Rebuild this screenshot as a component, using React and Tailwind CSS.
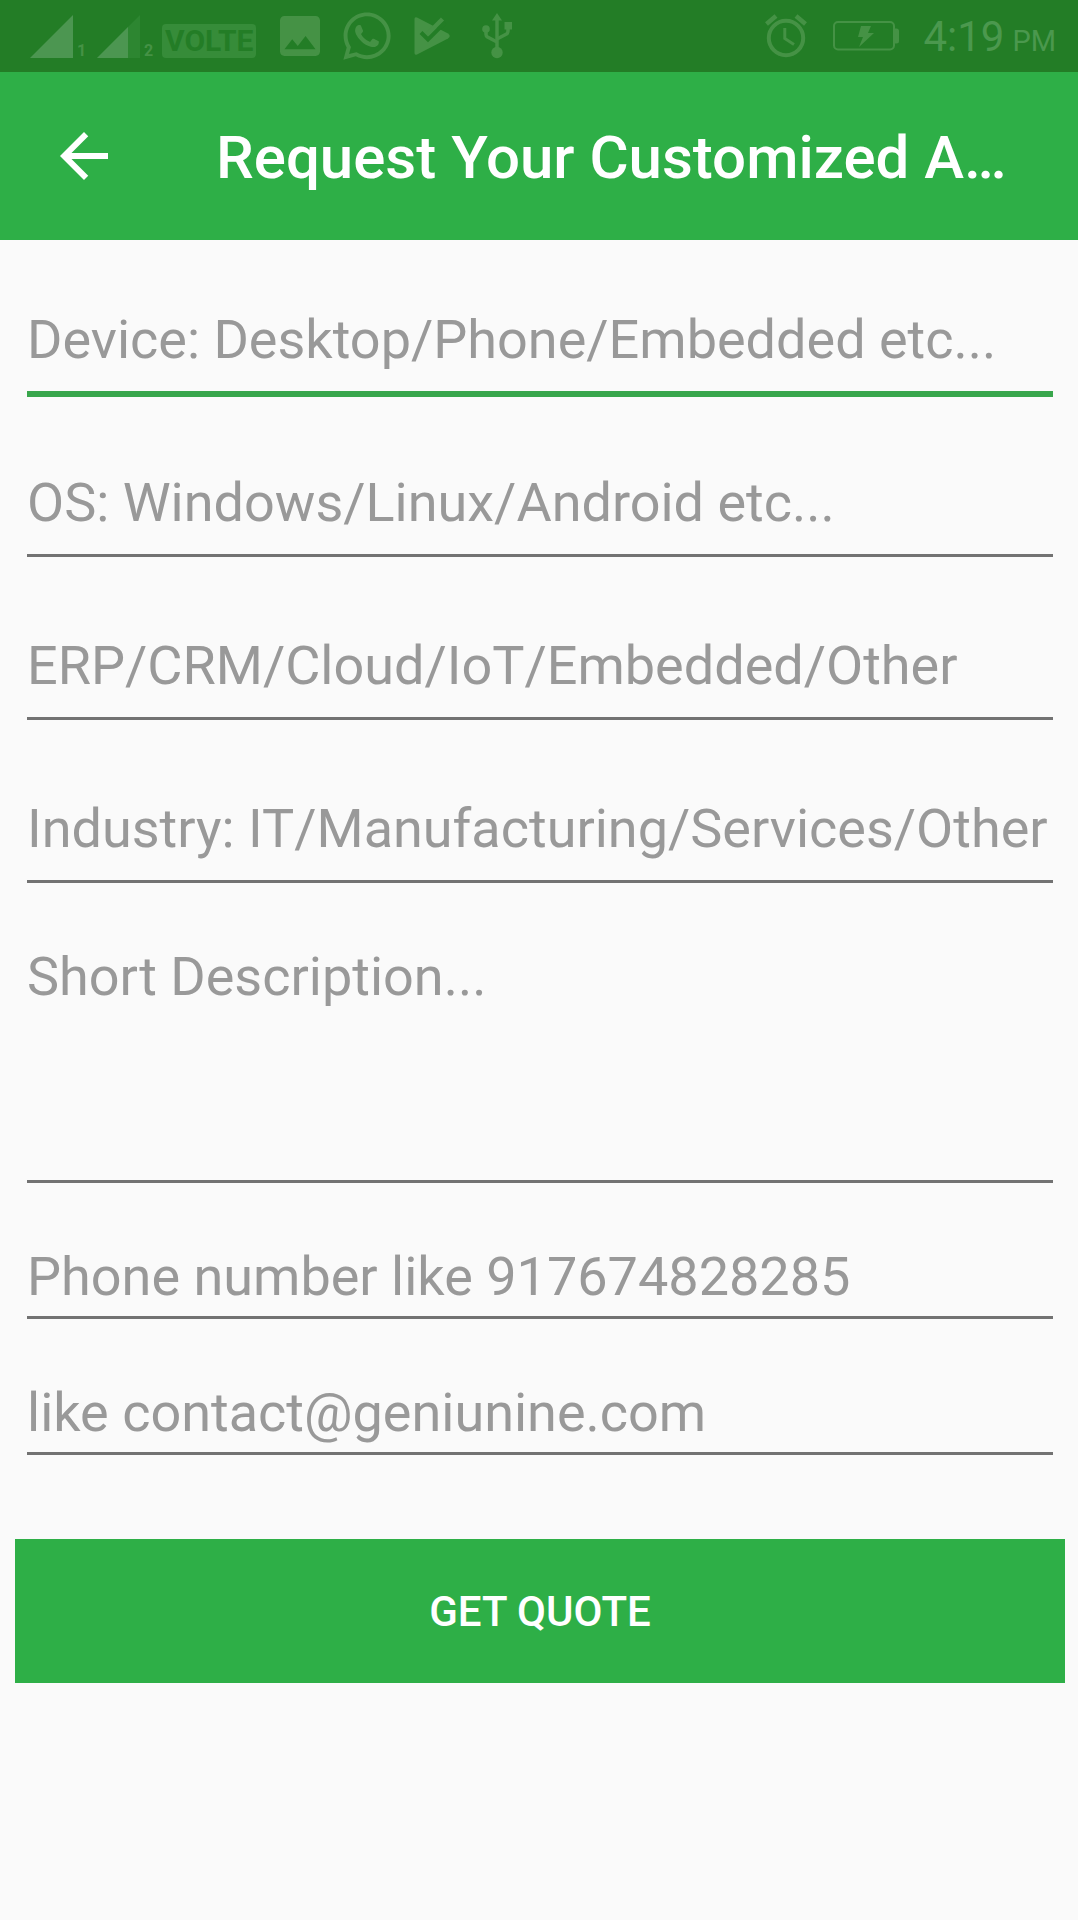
import { useState } from "react";
import { FaWhatsapp } from "react-icons/fa";

const topFields = [
  { id: "device", placeholder: "Device: Desktop/Phone/Embedded etc..." },
  { id: "os", placeholder: "OS: Windows/Linux/Android etc..." },
  { id: "category", placeholder: "ERP/CRM/Cloud/IoT/Embedded/Other" },
  { id: "industry", placeholder: "Industry: IT/Manufacturing/Services/Other" },
];

const contactFields = [
  { id: "phone", type: "tel", placeholder: "Phone number like 917674828285" },
  { id: "email", type: "email", placeholder: "like contact@geniunine.com" },
];

const fieldBase =
  "block w-full rounded-none border-b-[3px] bg-transparent text-[54px] leading-[64px] text-[#212121] placeholder:text-[#999999] placeholder:opacity-100 outline-none";
const fieldIdle = "border-[#727272]";
const fieldActive = "border-[#38a64c] shadow-[0_3px_0_#38a64c]";

function SignalIcons() {
  return (
    <div className="flex items-end font-bold text-[16px] leading-[14px] text-[#459245]">
      <svg className="h-[43px] w-[43px]" viewBox="0 0 43 43" aria-hidden="true">
        <path d="M0 43L43 0V43Z" fill="#4c9651" />
      </svg>
      <span className="ml-1 w-5">1</span>
      <svg className="h-[43px] w-[43px]" viewBox="0 0 43 43" aria-hidden="true">
        <path d="M0 43L43 0V43Z" fill="#2d8631" />
        <path d="M0 43L31 12V43Z" fill="#4c9651" />
      </svg>
      <span className="ml-1 w-[18px]">2</span>
    </div>
  );
}

function ImageIcon() {
  return (
    <svg className="size-10" viewBox="3 3 18 18" fill="currentColor" aria-hidden="true">
      <path d="M21 19V5c0-1.1-.9-2-2-2H5c-1.1 0-2 .9-2 2v14c0 1.1.9 2 2 2h14c1.1 0 2-.9 2-2zM8.5 13.5l2.5 3.01L14.5 12l4.5 6H5l3.5-4.5z" />
    </svg>
  );
}

function PlayCheckIcon() {
  return (
    <svg className="h-10 w-9" viewBox="0 0 36 40" aria-hidden="true">
      <path
        d="M0.5 3Q0.5 0.5 3 1.5L34 17.5Q37.5 20 34 22.5L3 38.5Q0.5 39.5 0.5 37Z"
        fill="currentColor"
      />
      <path d="M7 16.5L14 23.5L31 6.500" fill="none" stroke="#237d26" strokeWidth="4" />
      <path d="M13 18.500L28.500 3" fill="none" stroke="currentColor" strokeWidth="4.500" />
    </svg>
  );
}

function UsbIcon() {
  return (
    <svg className="h-[46px] w-[30px]" viewBox="0 0 30 46" aria-hidden="true">
      <g fill="none" stroke="currentColor" strokeWidth="3.5">
        <path d="M15 6V38" />
        <path d="M4 17V21.5Q4 23 5.5 24L15 29" />
        <path d="M26 12V18Q26 20 24.5 21L15 26" />
      </g>
      <g fill="currentColor">
        <path d="M15 0L20 7.5H10Z" />
        <circle cx="4" cy="16" r="3.8" />
        <rect x="22.5" y="9" width="7.5" height="7.5" />
        <circle cx="15" cy="39.5" r="5.7" />
      </g>
    </svg>
  );
}

function AlarmIcon() {
  return (
    <svg
      className="h-11 w-[42px]"
      viewBox="0 0 42 44"
      fill="none"
      stroke="currentColor"
      aria-hidden="true"
    >
      <circle cx="21" cy="24" r="17.2" strokeWidth="4" />
      <path d="M19.8 14V24.5L29 30.5" strokeWidth="3" />
      <path d="M1.5 10L11 2M31 2L40.5 10" strokeWidth="4.5" />
    </svg>
  );
}

function BatteryIcon() {
  return (
    <svg className="h-[30px] w-[66px]" viewBox="0 0 66 30" aria-hidden="true">
      <rect x="1" y="1" width="60" height="27.5" rx="4" fill="none" stroke="currentColor" strokeWidth="2" />
      <path d="M61 7.5H63.5Q66 7.5 66 10V20Q66 22.5 63.5 22.5H61Z" fill="currentColor" />
      <path d="M28 5H38L35 12H41L26 26L30 16H25Z" fill="currentColor" />
    </svg>
  );
}

function StatusBar() {
  return (
    <div className="flex h-[72px] items-center justify-between bg-[#237d26] pl-[30px] pr-[22px] text-[#459245]">
      <div className="flex items-center">
        <div className="flex items-end">
          <SignalIcons />
          <span className="rounded bg-[#368c39] px-[3px] text-[30px] font-bold leading-[34px] text-[#237d26]">
            VOLTE
          </span>
        </div>
        <div className="ml-6 flex items-center gap-5">
          <ImageIcon />
          <FaWhatsapp className="size-[54px]" />
          <PlayCheckIcon />
          <div className="pl-3">
            <UsbIcon />
          </div>
        </div>
      </div>
      <div className="flex items-center">
        <AlarmIcon />
        <div className="ml-[26px] mr-6">
          <BatteryIcon />
        </div>
        <div className="flex items-baseline gap-2 pt-1 text-[#4b984e]">
          <span className="text-[42px] leading-[50px]">4:19</span>
          <span className="text-[29px]">PM</span>
        </div>
      </div>
    </div>
  );
}

function Toolbar() {
  return (
    <header className="flex items-start gap-24 bg-[#2eaf47] px-12 pb-11 pt-12 text-white">
      <button type="button" aria-label="Back" className="shrink-0">
        <svg className="size-[72px]" viewBox="0 0 24 24" fill="currentColor" aria-hidden="true">
          <path d="M20 11H7.83l5.59-5.59L12 4l-8 8 8 8 1.41-1.41L7.83 13H20v-2z" />
        </svg>
      </button>
      <h1 className="truncate text-[60px] font-medium leading-[76px]">
        Request Your Customized A…
      </h1>
    </header>
  );
}

export default function App() {
  const [active, setActive] = useState("device");

  const stateClass = (id) => (active === id ? fieldActive : fieldIdle);

  return (
    <div className="min-h-screen bg-[#fafafa] font-[Roboto,sans-serif]">
      <StatusBar />
      <Toolbar />

      <form className="pl-[15px] pr-[13px] pt-[68px]" onSubmit={(e) => e.preventDefault()}>
        <div className="flex flex-col gap-[77px] px-3">
          {topFields.map((field) => (
            <input
              key={field.id}
              id={field.id}
              type="text"
              aria-label={field.placeholder}
              placeholder={field.placeholder}
              onFocus={() => setActive(field.id)}
              className={`${fieldBase} pb-[19px] ${stateClass(field.id)}`}
            />
          ))}
        </div>

        <div className="mt-[62px] flex flex-col gap-[62px] px-3">
          <textarea
            id="description"
            aria-label="Short Description"
            placeholder="Short Description..."
            onFocus={() => setActive("description")}
            className={`${fieldBase} h-[238px] resize-none ${stateClass("description")}`}
          />
          {contactFields.map((field) => (
            <input
              key={field.id}
              id={field.id}
              type={field.type}
              aria-label={field.placeholder}
              placeholder={field.placeholder}
              onFocus={() => setActive(field.id)}
              className={`${fieldBase} pb-[7px] ${stateClass(field.id)}`}
            />
          ))}
        </div>

        <button
          type="submit"
          className="mt-[84px] block h-36 w-full bg-[#2eaf47] text-[42px] font-medium text-white"
        >
          GET QUOTE
        </button>
      </form>
    </div>
  );
}
